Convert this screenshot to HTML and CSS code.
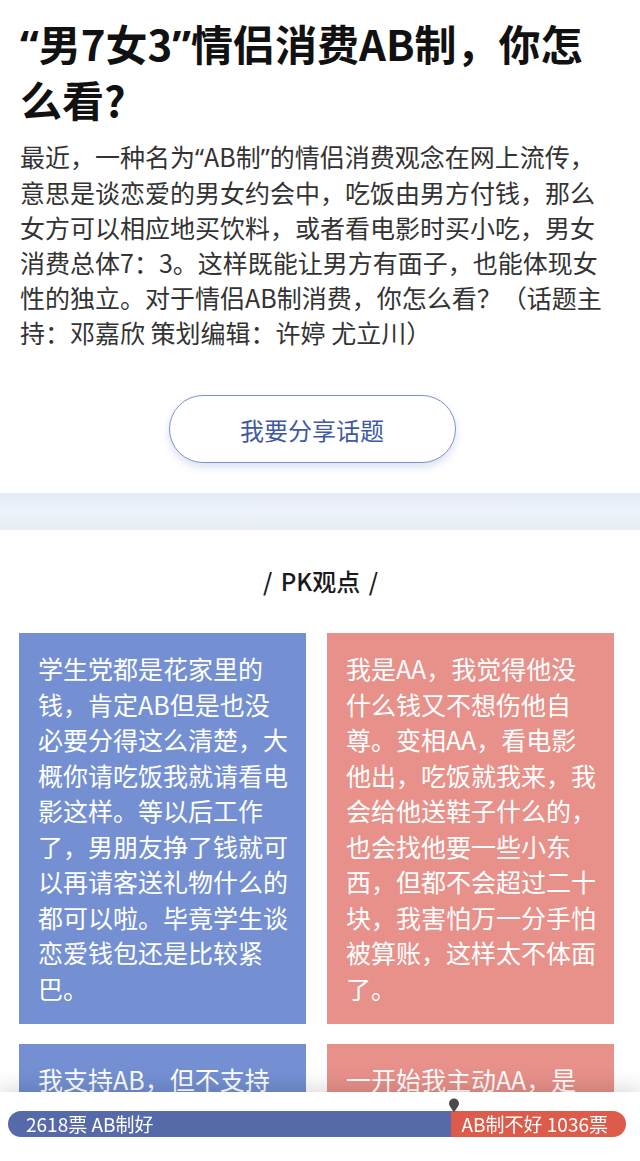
FILE: index.html
```html
<!DOCTYPE html>
<html lang="zh-CN">
<head>
<meta charset="utf-8">
<title>“男7女3”情侣消费AB制，你怎么看?</title>
<link rel="stylesheet" href="styles.css">
</head>
<body>
<div class="page">
  <section class="intro">
    <h1 class="title"><span class="q">“</span>男7女3<span class="q">”</span>情侣消费AB制，你怎么看?</h1>
    <p class="desc">最近，一种名为<span class="q">“</span>AB制<span class="q">”</span>的情侣消费观念在网上流传，意思是谈恋爱的男女约会中，吃饭由男方付钱，那么女方可以相应地买饮料，或者看电影时买小吃，男女消费总体7：3。这样既能让男方有面子，也能体现女性的独立。对于情侣AB制消费，你怎么看？（话题主持：邓嘉欣 策划编辑：许婷 尤立川）</p>
    <div class="btn-wrap">
      <a class="share-btn">我要分享话题</a>
    </div>
  </section>
  <div class="band"></div>
  <section class="pk">
    <h2 class="pk-title">/ PK观点 /</h2>
    <div class="cards">
      <div class="card card-a">学生党都是花家里的钱，肯定AB但是也没必要分得这么清楚，大概你请吃饭我就请看电影这样。等以后工作了，男朋友挣了钱就可以再请客送礼物什么的都可以啦。毕竟学生谈恋爱钱包还是比较紧巴。</div>
      <div class="card card-b">我是AA，我觉得他没什么钱又不想伤他自尊。变相AA，看电影他出，吃饭就我来，我会给他送鞋子什么的，也会找他要一些小东西，但都不会超过二十块，我害怕万一分手怕被算账，这样太不体面了。</div>
      <div class="card card-a card-tall">我支持AB，但不支持</div>
      <div class="card card-b card-tall">一开始我主动AA，是</div>
    </div>
  </section>
</div>
<div class="vote">
  <div class="pin-track">
    <svg class="pin" style="left:72.2%" width="12" height="15" viewBox="0 0 12 15"><path d="M6 0.5a5 5 0 0 1 5 5c0 2.6-3 5.4-5 9c-2-3.6-5-6.4-5-9a5 5 0 0 1 5-5z" fill="#4b4b4b"/></svg>
  </div>
  <div class="bar">
    <div class="bar-a" style="width:71.65%">2618票 AB制好</div>
    <div class="bar-b">AB制不好 1036票</div>
  </div>
</div>
</body>
</html>
```
FILE: styles.css
```css
* { box-sizing: border-box; }
html, body { margin: 0; padding: 0; }
body {
  font-family: "Noto Sans CJK SC", "Noto Sans", sans-serif;
  background: #fff;
  color: #333;
}
.page { padding-bottom: 80px; }
.intro { padding: 16px 28px 0 20px; }
.title {
  margin: 0;
  font-size: 42px;
  line-height: 54px;
  font-weight: 700;
  color: #111;
}
.desc {
  margin: 13px 0 0;
  font-size: 25px;
  line-height: 35px;
  color: #333;
}
.q { font-family: "Noto Sans", sans-serif; }
.btn-wrap {
  display: flex;
  justify-content: center;
  padding: 45px 8px 30px 0;
}
.share-btn {
  display: flex;
  align-items: center;
  justify-content: center;
  width: 287px;
  height: 68px;
  border: 1.5px solid #7d93cc;
  border-radius: 34px;
  color: #3f5aa3;
  font-size: 24px;
  box-shadow: 0 4px 8px rgba(90, 120, 200, 0.22);
  background: #fff;
}
.band {
  height: 37px;
  background: linear-gradient(to bottom, #e3ebf5 0%, #eff3f9 50%, #e6edf6 100%);
}
.pk { padding: 0 26px 0 19px; }
.pk-title {
  margin: 35px 0 36px;
  text-align: center;
  font-size: 24px;
  line-height: 32px;
  font-weight: 500;
  color: #1a1a1a;
  padding-left: 8px;
  word-spacing: 3px;
}
.cards {
  display: grid;
  grid-template-columns: 1fr 1fr;
  column-gap: 21px;
  row-gap: 20px;
}
.card {
  padding: 18px 13px 18px 19px;
  font-size: 25px;
  line-height: 35.5px;
  color: #fff;
}
.card-a { background: #7490d3; }
.card-b { background: #e8918a; }
.card-tall { min-height: 200px; }
.vote {
  position: fixed;
  left: 0;
  right: 0;
  bottom: 0;
  height: 69px;
  background: #fff;
  box-shadow: 0 -6px 18px rgba(0, 0, 0, 0.13);
  padding: 6px 14px 0 8px;
}
.pin-track { position: relative; height: 13px; }
.pin { position: absolute; top: 0; transform: translateX(-50%); }
.bar {
  display: flex;
  height: 26px;
  border-radius: 13px;
  overflow: hidden;
  font-size: 19px;
  line-height: 26px;
  color: #fff;
}
.bar-a {
  background: #5669a8;
  padding-left: 18px;
  white-space: nowrap;
}
.bar-b {
  flex: 1;
  background: #dd5b4b;
  text-align: right;
  padding-right: 18px;
  white-space: nowrap;
}
```
